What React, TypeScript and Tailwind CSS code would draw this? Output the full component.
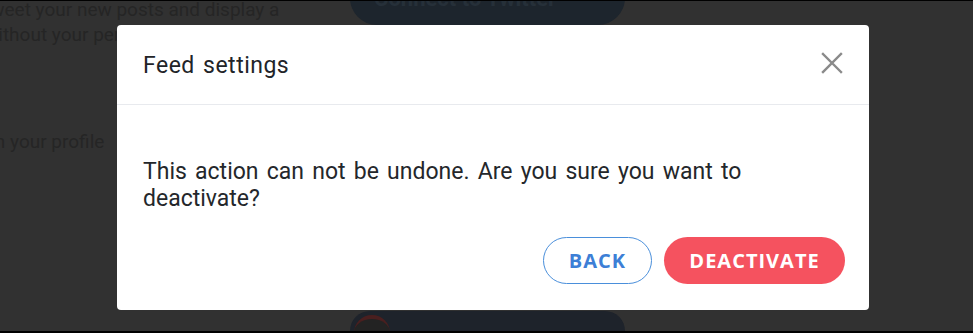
import React from "react";

const Backdrop = () => (
  <div className="flex flex-col h-full font-['Roboto',sans-serif] text-[#252525]">
    {/* page behind the dialog, seen through the overlay */}
    <div className="flex">
      <div className="-ml-[16px] w-[340px] text-[19px] leading-[25px]">
        <p className="-mt-[4px]">tweet your new posts and display a</p>
        <p>without your permission</p>
        <p className="mt-[82px]">on your profile</p>
      </div>
      <div className="ml-[26px] -mt-[30px] w-[275px] h-[54px] rounded-full bg-[#1d252d] flex items-center gap-3 pl-6">
        <span className="text-[#263039] text-[22px] font-bold">Connect to Twitter</span>
      </div>
    </div>
    <div className="flex-1" />
    <div className="flex items-start h-[20px]">
      <div className="ml-[350px] w-[275px] h-[40px] rounded-[20px] bg-[#1e232b] flex items-start pl-[4px] pt-[4px]">
        <div className="w-[36px] h-[36px] rounded-full bg-[#232323] border-t-4 border-[#4a1f1f]" />
      </div>
    </div>
    <div className="h-[2px] bg-black" />
  </div>
);

const CloseIcon = () => (
  <svg width="24" height="24" viewBox="0 0 24 24" fill="none" stroke="#8a8a8a" strokeWidth="2.4" strokeLinecap="square">
    <path d="M3 3 L21 21 M21 3 L3 21" />
  </svg>
);

export default function App() {
  return (
    <div className="relative w-[973px] h-[333px] overflow-hidden bg-[#313131] border-t border-black">
      <Backdrop />

      {/* dialog overlay */}
      <div className="absolute inset-0 pt-[24px] pl-[117px]">
        <div className="w-[752px] h-[285px] bg-white rounded-[4px] flex flex-col">
          <div className="h-[80px] flex items-center justify-between pl-[26px] pr-[25px] pt-[3px] border-b border-[#e8eaee]">
            <h2 className="font-['Roboto',sans-serif] text-[23px] tracking-[0.5px] [word-spacing:2px] text-[#222428]">
              Feed settings
            </h2>
            <button className="-mt-[6px]">
              <CloseIcon />
            </button>
          </div>
          <div className="flex-1 flex flex-col pl-[26px] pr-[24px] pt-[53px]">
            <p className="font-['Roboto',sans-serif] text-[23px] leading-[27px] [word-spacing:2.5px] text-[#24272b] pr-[90px]">
              This action can not be undone. Are you sure you want to deactivate?
            </p>
            <div className="flex justify-end gap-[12px] mt-[25px]">
              <button className="w-[109px] h-[47px] rounded-full border-[1.5px] border-[#4a8fdb] text-[#3d7fd6] font-['Open_Sans',sans-serif] font-bold text-[20px] tracking-[1px]">
                BACK
              </button>
              <button className="w-[181px] h-[47px] rounded-full bg-[#f5525f] text-white font-['Open_Sans',sans-serif] font-bold text-[20px] tracking-[1px]">
                DEACTIVATE
              </button>
            </div>
          </div>
        </div>
      </div>
    </div>
  );
}
